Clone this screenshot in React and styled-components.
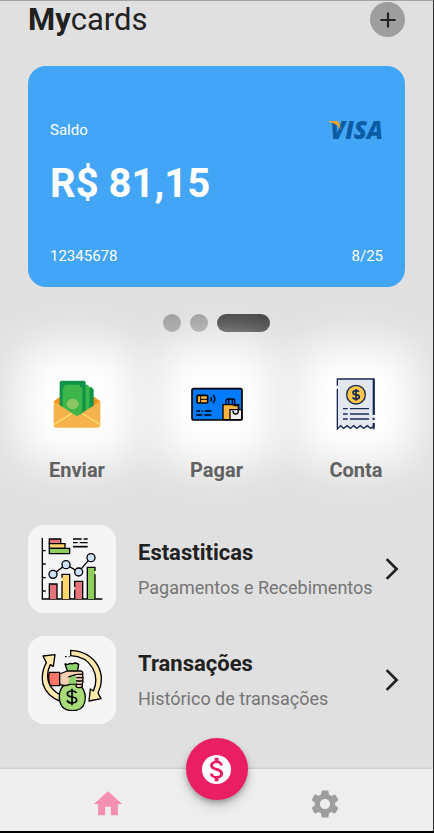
import React from "react";
import styled, { createGlobalStyle } from "styled-components";
import {
  MdAdd,
  MdArrowForwardIos,
  MdHome,
  MdMonetizationOn,
  MdSettings,
} from "react-icons/md";

const GlobalStyle = createGlobalStyle`
  *, *::before, *::after { box-sizing: border-box; }
  body {
    margin: 0;
    background: #e0e0e0;
    color: #212121;
    font-family: Roboto, "Liberation Sans", sans-serif;
  }
  button { font: inherit; color: inherit; }
`;

const Page = styled.div`
  display: flex;
  flex-direction: column;
  min-height: 100vh;
  overflow: hidden;
  background: #e0e0e0;
  border-top: 1px solid #a4a4a4;
  border-right: 1px solid #303030;
  border-bottom: 2px solid #000;
`;

const Content = styled.main`
  display: flex;
  flex-direction: column;
  padding: 1px 28px 44px;
`;

const Header = styled.header`
  display: flex;
  align-items: center;
  justify-content: space-between;
  margin-bottom: 29px;
`;

const Title = styled.h1`
  margin: 0;
  font-size: 31px;
  line-height: 35px;
  font-weight: 400;
`;

const AddButton = styled.button`
  display: grid;
  place-items: center;
  width: 35px;
  height: 35px;
  padding: 0;
  border: 0;
  border-radius: 50%;
  background: #9e9e9e;
`;

const Card = styled.section`
  padding: 52px 22px 21px;
  border-radius: 18px;
  background: #42a5f5;
  color: #fff;
`;

const CardRow = styled.div`
  display: flex;
  align-items: center;
  justify-content: space-between;
  font-size: 15px;
  line-height: 20px;
`;

const Amount = styled.p`
  margin: 18px 0 38px;
  font-size: 40px;
  line-height: 48px;
  font-weight: 700;
`;

const Brand = styled.span`
  position: relative;
  color: #0a5ca4;
  font-family: "Open Sans", "Noto Sans", sans-serif;
  font-size: 24px;
  line-height: 24px;
  font-style: italic;
  font-weight: 800;
`;

const BrandFlick = styled.svg`
  position: absolute;
  left: -1px;
  top: 3px;
`;

const Dots = styled.div`
  display: flex;
  justify-content: center;
  gap: 9px;
  margin: 27px 0 23px;
`;

const Dot = styled.button`
  width: ${(p) => (p.$active ? 53 : 18)}px;
  height: 18px;
  padding: 0;
  border: 0;
  border-radius: 9px;
  background: ${(p) => (p.$active ? "#424242" : "#9e9e9e")};
`;

const Actions = styled.div`
  display: flex;
  justify-content: space-between;
  margin-bottom: 43px;
`;

const Action = styled.button`
  display: flex;
  flex-direction: column;
  align-items: center;
  gap: 5px;
  isolation: isolate;
  padding: 0;
  border: 0;
  background: none;
  color: #616161;
  font-size: 20px;
  line-height: 24px;
  font-weight: 700;
`;

const ActionTile = styled.span`
  position: relative;
  display: grid;
  place-items: center;
  width: 98px;
  height: 98px;

  &::before {
    content: "";
    position: absolute;
    z-index: -1;
    inset: -11px;
    border-radius: 22px;
    background: #fff;
    filter: blur(22px);
  }
`;

const Links = styled.nav`
  display: flex;
  flex-direction: column;
  gap: 23px;
`;

const LinkRow = styled.a`
  display: flex;
  align-items: center;
  gap: 22px;
  color: #212121;
  text-decoration: none;
`;

const LinkTile = styled.span`
  display: grid;
  place-items: center;
  flex: none;
  width: 88px;
  height: 88px;
  border-radius: 16px;
  background: #f5f5f5;
`;

const LinkText = styled.span`
  display: flex;
  flex: 1;
  flex-direction: column;
  gap: 10px;
  white-space: nowrap;
`;

const LinkTitle = styled.strong`
  font-size: 22px;
  line-height: 28px;
  font-weight: 700;
`;

const LinkNote = styled.span`
  color: #757575;
  font-size: 18px;
  line-height: 22px;
`;

const Chevron = styled(MdArrowForwardIos)`
  flex: none;
  margin-left: -22px;
`;

const BottomBar = styled.nav`
  position: relative;
  display: grid;
  grid-template-columns: 1fr 1fr;
  justify-items: center;
  margin-top: auto;
  padding: 18px 0 10px;
  background: #eeeeee;
  box-shadow: 0 -1px 2px rgba(0, 0, 0, 0.1);
`;

const Tab = styled.button`
  display: flex;
  padding: 0;
  border: 0;
  background: none;
  color: ${(p) => (p.$active ? "#f48fb1" : "#9e9e9e")};
`;

const PayButton = styled.button`
  position: absolute;
  top: -31px;
  left: 50%;
  display: grid;
  place-items: center;
  width: 62px;
  height: 62px;
  margin-left: -31px;
  padding: 0;
  border: 0;
  border-radius: 50%;
  background: #e91e63;
  color: #fff;
  box-shadow: 0 3px 5px rgba(0, 0, 0, 0.22), 0 6px 11px rgba(0, 0, 0, 0.16);
`;

function SendIcon() {
  return (
    <svg width="52" height="52" viewBox="64 52 156 156" aria-hidden="true">
      <path d="M72 122 90 109H194L212 122 190 155H95Z" fill="#f7931e" />
      <path d="M160 80H186L192 87V145H160Z" fill="#0f9347" />
      <path d="M150 72H174L180 80V150H150Z" fill="#3cb54a" />
      <path d="M90 64 94 60H164L168 64V150L142 168 90 145Z" fill="#0f9347" />
      <path d="M105 72H150Q151 81 158 81V152L142 168 99 142V81Q105 80 105 72Z" fill="#3cb54a" />
      <ellipse cx="129" cy="130" rx="18" ry="16" fill="#8cc663" />
      <path d="M72 122 142 167 212 122V194Q212 201 205 201H79Q72 201 72 194Z" fill="#f7b34b" />
      <path d="M73 191 126 159M211 191 158 159" stroke="#ffdf70" strokeWidth="4" fill="none" />
    </svg>
  );
}

function PayIcon() {
  return (
    <svg width="52" height="52" viewBox="62 36 156 156" aria-hidden="true">
      <rect x="65" y="68" width="150" height="94" rx="5" fill="#007aff" stroke="#000" strokeWidth="5" />
      <rect x="80" y="88" width="32" height="23" rx="4" fill="#ffb43b" stroke="#000" strokeWidth="5" />
      <path d="M91 88V111M91 100H112" stroke="#000" strokeWidth="3" fill="none" />
      <path d="M121 94Q126 100 121 106M128 86Q139 99 128 112" stroke="#000" strokeWidth="4" fill="none" />
      <path d="M78 135H89M93 135H98M103 135H123M78 147H96M102 147H123" stroke="#000" strokeWidth="5" />
      <path d="M158 161V116H205V161Z" fill="#ffb33e" stroke="#000" strokeWidth="4" />
      <path d="M167 115V105Q167 99 175 99H187Q193 99 193 105V115M175 99V115M186 99V115" fill="none" stroke="#000" strokeWidth="4" />
      <path d="M179 161V131H214V161Z" fill="#eee" stroke="#000" strokeWidth="4" />
      <path d="M189 119H204V134Q204 144 196 144Q188 144 188 134" fill="none" stroke="#000" strokeWidth="4" />
    </svg>
  );
}

function BillIcon() {
  return (
    <svg width="52" height="52" viewBox="60 37 156 156" aria-hidden="true">
      <path d="M83 40H190V188L182 179 173 188 163 179 153 188 143 179 133 188 123 179 113 188 103 179 93 188 83 179Z" fill="#e3e7f0" />
      <path d="M82 60V40H192V147M82 69V190L92 180 101 188 111 180 121 188 131 180 141 188 151 180 161 188 172 180 182 188 192 180V172" fill="none" stroke="#172a54" strokeWidth="4" />
      <path d="M191 40V148M191 156V163M191 172V191" stroke="#172a54" strokeWidth="6" />
      <circle cx="138" cy="87" r="28" fill="#ffc84a" stroke="#172a54" strokeWidth="4" />
      <path d="M147 78Q145 75 138 75Q129 75 129 81Q129 86 138 87Q148 88 148 94Q148 100 138 100Q130 100 128 95M138 70V105" fill="none" stroke="#172a54" strokeWidth="5" />
      <path d="M99 129H113M120 129H177M99 145H113M120 145H177M99 160H113M120 160H177" stroke="#172a54" strokeWidth="4" />
    </svg>
  );
}

function ChartIcon() {
  return (
    <svg width="62" height="62" viewBox="62 55 186 186" aria-hidden="true">
      <g stroke="#000" strokeWidth="4">
        <path d="M66 55V238H246M66 93H76M66 133H76M66 174H76M66 214H76" fill="none" />
        <path d="M87 58H121V72H87Z" fill="#e5737c" />
        <path d="M87 72H134V86H87Z" fill="#ffd66e" />
        <path d="M87 86H148V102H87Z" fill="#8fce5a" />
        <path d="M158 58H184M190 58H202M158 69H172M178 69H202" fill="none" />
        <path d="M158 81H202" strokeWidth="5" />
        <path d="M87 238V193H110V238" fill="#e5737c" />
        <path d="M125 238V164H148V238Z" fill="#ffd66e" stroke="none" />
        <path d="M125 238V184M125 174V164H148V238" fill="none" />
        <path d="M163 238V185H187V238Z" fill="#e5737c" stroke="none" />
        <path d="M163 238V210M163 202V185H187V238" fill="none" />
        <path d="M201 238V143H224V238Z" fill="#8fce5a" stroke="none" />
        <path d="M201 238V143H224V154M224 164V238" fill="none" />
        <path d="M98 164 137 135 175 157 212 113" fill="none" />
        <g fill="#cfe2fc">
          <circle cx="98" cy="164" r="12" />
          <circle cx="137" cy="135" r="12" />
          <circle cx="175" cy="157" r="12" />
          <circle cx="212" cy="114" r="12" />
        </g>
      </g>
    </svg>
  );
}

function TransferIcon() {
  return (
    <svg width="62" height="62" viewBox="62 55 186 186" aria-hidden="true">
      <g stroke="#000" strokeWidth="4" strokeLinejoin="round">
        <path d="M151 59Q207 62 232 104Q254 144 233 187L242 204 206 211 210 175 219 181Q235 145 217 112Q196 77 151 75Z" fill="#ffe9ac" />
        <path d="M118 211Q80 197 68 161Q61 127 78 96L68 76 104 72 99 107 90 102Q76 130 86 158Q95 180 118 191Z" fill="#ffe9ac" />
        <path d="M87 125H118V165H90Q82 144 87 125Z" fill="#ff7565" />
        <path d="M134 78H139M145 78H148" fill="none" />
        <path d="M143 126 134 100Q145 103 148 98Q157 101 162 97Q169 97 175 101L171 126 176 160H137Z" fill="#8fd16a" />
        <path d="M137 158Q117 173 117 197Q117 240 156 240Q195 240 195 199Q193 173 173 159Z" fill="#a9db79" />
        <path d="M118 130 141 121H183Q189 124 187 131V137Q190 140 187 148Q190 154 186 159V167Q183 173 171 170Q164 167 169 160H151L139 164Q124 166 118 160Z" fill="#f7ceb1" />
        <path d="M144 139 169 131M169 131H187M168 141H187M167 151H187M168 161H187" fill="none" />
        <path d="M149 139 143 159H167V135Z" fill="#8fd16a" stroke="none" />
        <path d="M168 187Q165 181 155 181Q141 181 141 190Q141 197 155 199Q169 201 169 208Q169 217 155 217Q143 217 140 209M155 174V224" fill="none" strokeWidth="5" />
      </g>
    </svg>
  );
}

const actions = [
  { label: "Enviar", Icon: SendIcon },
  { label: "Pagar", Icon: PayIcon },
  { label: "Conta", Icon: BillIcon },
];

const links = [
  { title: "Estastiticas", note: "Pagamentos e Recebimentos", Icon: ChartIcon },
  { title: "Transações", note: "Histórico de transações", Icon: TransferIcon },
];

export default function App() {
  return (
    <>
      <GlobalStyle />
      <Page>
        <Content>
          <Header>
            <Title>
              <b>My</b>cards
            </Title>
            <AddButton type="button" aria-label="Adicionar">
              <MdAdd size={26} />
            </AddButton>
          </Header>

          <Card>
            <CardRow>
              <span>Saldo</span>
              <Brand>
                VISA
                <BrandFlick width="13" height="10" viewBox="0 0 13 10" aria-hidden="true">
                  <path d="M0 0H8Q10 0 10 2L12 9Q8 2 0 1Z" fill="#f9a51a" />
                </BrandFlick>
              </Brand>
            </CardRow>
            <Amount>R$ 81,15</Amount>
            <CardRow>
              <span>12345678</span>
              <span>8/25</span>
            </CardRow>
          </Card>

          <Dots>
            <Dot type="button" aria-label="1" />
            <Dot type="button" aria-label="2" />
            <Dot type="button" aria-label="3" $active />
          </Dots>

          <Actions>
            {actions.map(({ label, Icon }) => (
              <Action key={label} type="button">
                <ActionTile>
                  <Icon />
                </ActionTile>
                {label}
              </Action>
            ))}
          </Actions>

          <Links>
            {links.map(({ title, note, Icon }) => (
              <LinkRow key={title} href="#">
                <LinkTile>
                  <Icon />
                </LinkTile>
                <LinkText>
                  <LinkTitle>{title}</LinkTitle>
                  <LinkNote>{note}</LinkNote>
                </LinkText>
                <Chevron size={26} />
              </LinkRow>
            ))}
          </Links>
        </Content>

        <BottomBar>
          <Tab type="button" aria-label="Início" $active>
            <MdHome size={34} />
          </Tab>
          <Tab type="button" aria-label="Ajustes">
            <MdSettings size={34} />
          </Tab>
          <PayButton type="button" aria-label="Pagamento">
            <MdMonetizationOn size={35} />
          </PayButton>
        </BottomBar>
      </Page>
    </>
  );
}
